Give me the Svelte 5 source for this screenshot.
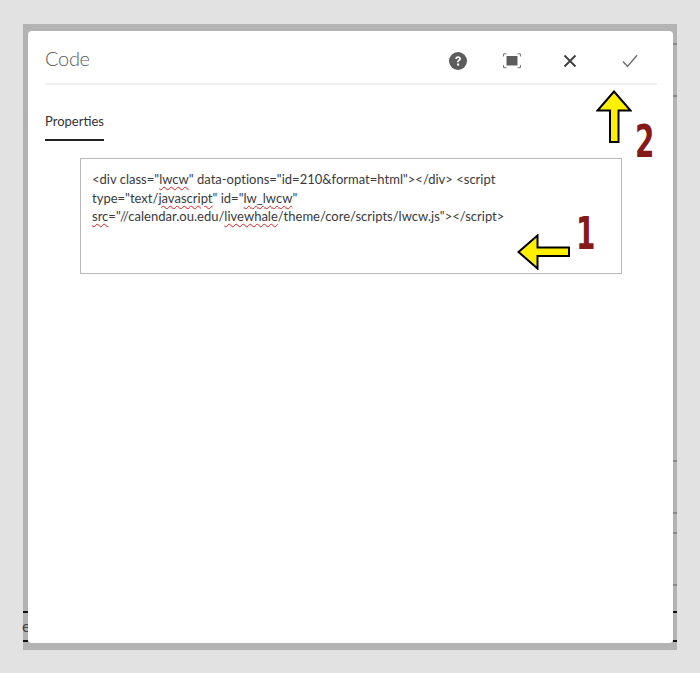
<script>
  const rightTicks = [43, 95, 460, 512, 532, 584];
  const leftTicks = [611, 640];
  const rightDark = [611, 640];
</script>

<div class="page">
  <div class="frame">
    <span class="stray">e</span>
    <div class="dialog">
      <header class="head">
        <h1>Code</h1>
        <div class="actions">
          <button class="icon help" aria-label="Help">
            <svg viewBox="0 0 18 18" width="18" height="18"><circle cx="9" cy="9" r="9" fill="#5c5c5c"/><path d="M6.2 7.1c0-1.7 1.2-2.8 2.9-2.8s2.8 1 2.8 2.4c0 1.1-.6 1.7-1.4 2.2-.7.4-.9.7-.9 1.4H8c0-1.2.3-1.800 1.200-2.400.6-.4.9-.6.9-1.100 0-.5-.4-.9-1-.9-.7 0-1.100.4-1.100 1.100z" fill="#fff"/><rect x="8" y="11.500" width="2.100" height="2.100" fill="#fff"/></svg>
          </button>
          <button class="icon fit" aria-label="Fullscreen">
            <svg viewBox="0 0 18 16" width="18" height="16"><rect x="3.500" y="3" width="11" height="9.500" fill="#5c5c5c"/><path d="M.6 3.500V.8h2.800M14.600.8h2.800v2.700M.6 12v2.700h2.800M14.600 14.700h2.800V12" fill="none" stroke="#6e6e6e" stroke-width="1"/></svg>
          </button>
          <button class="icon close" aria-label="Close">
            <svg viewBox="0 0 14 14" width="14" height="14"><path d="M1.500 1.500l11 11M12.500 1.500l-11 11" stroke="#3c3c3c" stroke-width="1.800" fill="none"/></svg>
          </button>
          <button class="icon ok" aria-label="Done">
            <svg viewBox="0 0 16 14" width="16" height="14"><path d="M1 7.500l4.500 5L15 1.200" stroke="#6e6e6e" stroke-width="1.400" fill="none"/></svg>
          </button>
        </div>
      </header>

      <nav class="tabs"><span class="tab">Properties</span></nav>

      <div class="code">
        &lt;div class="<span class="sp">lwcw</span>" data-options="id=210&amp;format=html"&gt;&lt;/div&gt; &lt;script<br />
        type="text/<span class="sp">javascript</span>" id="<span class="sp">lw_lwcw</span>"<br />
        <span class="sp">src</span>="//calendar.ou.edu/<span class="sp">livewhale</span>/theme/core/scripts/lwcw.js"&gt;&lt;/script&gt;
      </div>
    </div>

    {#each rightTicks as y}
      <i class="tick right" style="top:{y - 24}px"></i>
    {/each}
    {#each rightDark as y}
      <i class="tick right dark" style="top:{y - 24}px"></i>
    {/each}
    {#each leftTicks as y}
      <i class="tick left dark" style="top:{y - 24}px"></i>
    {/each}
  </div>

  <svg class="arrow up" viewBox="0 0 36 54" width="36" height="54">
    <path d="M18 1.500L34.500 20.500H22.500V52H14V20.500H1.500z" fill="#ffef00" stroke="#000" stroke-width="2"/>
  </svg>
  <span class="num two">2</span>

  <svg class="arrow leftward" viewBox="0 0 54 36" width="54" height="36">
    <path d="M1.500 18L20.500 1.500V13.500H52V22H20.500V34.500z" fill="#ffef00" stroke="#000" stroke-width="2"/>
  </svg>
  <span class="num one">1</span>
</div>

<style>
  :global(body) {
    margin: 0;
    background: #e2e2e2;
  }
  .page {
    position: relative;
    width: 700px;
    height: 673px;
    padding: 24px 23px 23px;
    box-sizing: border-box;
    background: #e2e2e2;
    overflow: hidden;
  }
  .frame {
    position: relative;
    width: 654px;
    height: 626px;
    padding: 7px 4px 7px 5px;
    box-sizing: border-box;
    background: #b3b3b3;
  }
  .dialog {
    position: relative;
    height: 612px;
    padding: 0 16px 0 17px;
    box-sizing: border-box;
    background: #fff;
    border-radius: 4px;
    font-family: "Lato", "Open Sans", sans-serif;
  }
  .head {
    display: flex;
    align-items: center;
    justify-content: space-between;
    height: 54px;
    box-sizing: border-box;
    border-bottom: 2px solid #f0f0f0;
  }
  h1 {
    margin: 1px 0 0;
    font-size: 20px;
    font-weight: 300;
    color: #5a5a5a;
    letter-spacing: -0.300px;
  }
  .actions {
    display: flex;
    align-items: center;
    margin-right: 18px;
  }
  .icon {
    display: flex;
    align-items: center;
    justify-content: center;
    padding: 0;
    border: 0;
    background: none;
    width: 18px;
    height: 18px;
    margin-top: 8px;
  }
  .fit { margin-left: 36px; }
  .close { margin-left: 40px; }
  .ok { margin-left: 42px; }
  .tabs {
    display: flex;
    margin-top: 27px;
  }
  .tab {
    padding-bottom: 9px;
    border-bottom: 2px solid #222;
    font-size: 13px;
    line-height: 18px;
    color: #333;
  }
  .code {
    width: 542px;
    height: 116px;
    margin: 17px 0 0 35px;
    padding: 11px;
    box-sizing: border-box;
    border: 1px solid #b9b9b9;
    font-size: 13px;
    letter-spacing: 0.01px;
    line-height: 18.500px;
    color: #3a3a3a;
  }
  .sp {
    text-decoration: underline wavy #dc1f1f 1.200px;
    text-underline-offset: 2px;
  }
  .tick {
    position: absolute;
    width: 4px;
    height: 2px;
    background: #8a8a8a;
  }
  .tick.right { right: 0; }
  .tick.left { left: 0; width: 5px; }
  .tick.dark { background: #111; }
  .stray {
    position: absolute;
    left: -1px;
    top: 594px;
    font: 16px/16px "Lato", sans-serif;
    color: #444;
  }
  .arrow { position: absolute; }
  .up { left: 596px; top: 90px; }
  .leftward { left: 517px; top: 234px; }
  .num {
    position: absolute;
    font-family: "DejaVu Sans", sans-serif;
    font-weight: 700;
    font-size: 45px;
    line-height: 34px;
    color: #861a1a;
    transform: scaleX(0.62);
    transform-origin: left top;
  }
  .one { left: 576px; top: 217px; }
  .two { left: 635px; top: 125px; }
</style>
